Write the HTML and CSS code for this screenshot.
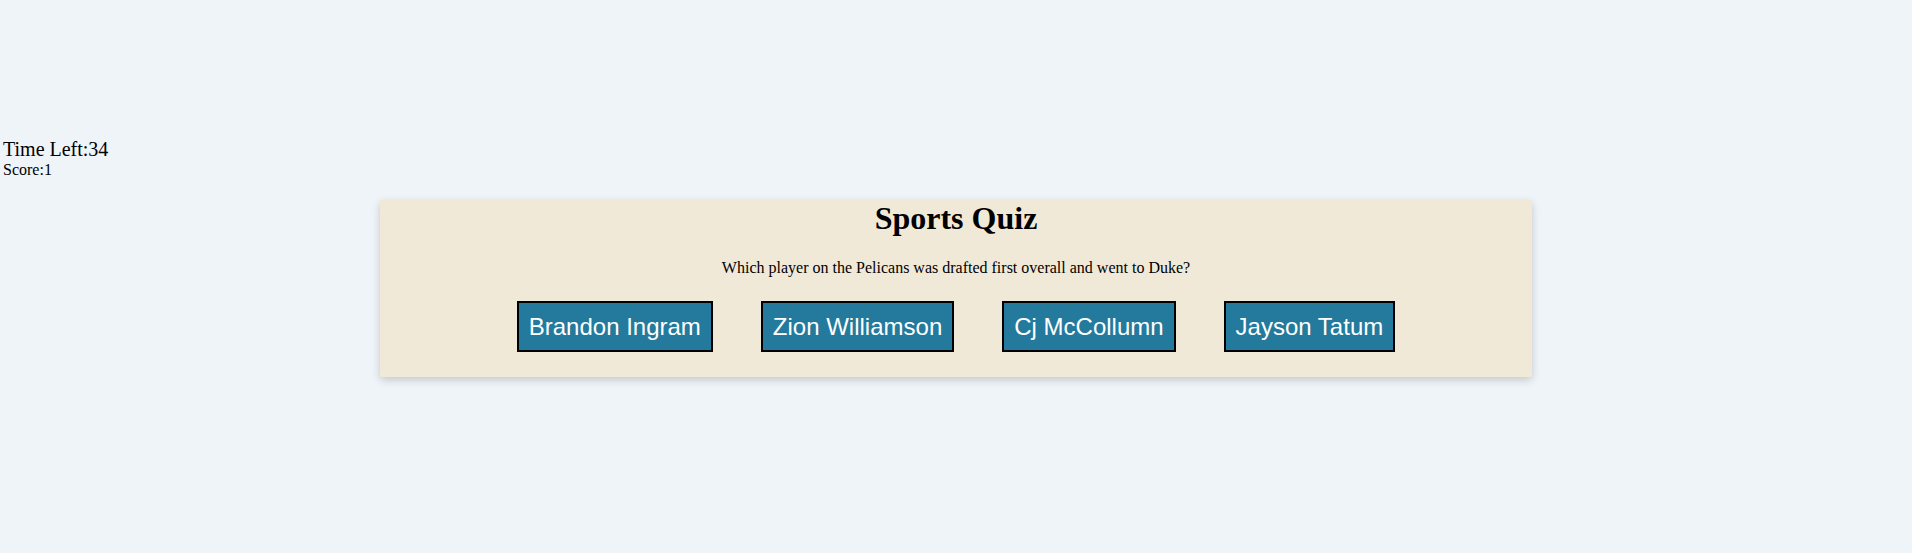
FILE: index.html
```html
<!DOCTYPE html>
<html>
<head>
<meta charset="utf-8">
<title>Sports Quiz</title>
<link rel="stylesheet" href="styles.css">
</head>
<body>
<div class="top-space"></div>
<div class="status">
  <div class="timer">Time Left:34</div>
  <div class="score">Score:1</div>
</div>
<main class="card">
  <h1 class="title">Sports Quiz</h1>
  <p class="question">Which player on the Pelicans was drafted first overall and went to Duke?</p>
  <div class="answers">
    <button class="answer">Brandon Ingram</button>
    <button class="answer">Zion Williamson</button>
    <button class="answer">Cj McCollumn</button>
    <button class="answer">Jayson Tatum</button>
  </div>
</main>
</body>
</html>
```
FILE: styles.css
```css
html, body {
  margin: 0;
  padding: 0;
}
body {
  background: #eff4f8;
  font-family: "Liberation Serif", "Times New Roman", serif;
  color: #000;
  width: 1912px;
  height: 553px;
  overflow: hidden;
}
.top-space {
  height: 138px;
}
.status {
  padding-left: 3px;
}
.timer {
  font-size: 20px;
  line-height: 23px;
}
.score {
  font-size: 16px;
  line-height: 18.4px;
}
.card {
  width: 1152px;
  margin: 21px auto 0;
  background: #f1e9d8;
  box-shadow: 0 3px 8px rgba(0, 0, 0, 0.18);
  padding: 0 0 25px;
  text-align: center;
}
.title {
  margin: 0;
  font-size: 32px;
  font-weight: bold;
  line-height: 36.8px;
}
.question {
  margin: 22px 0 23px;
  font-size: 16px;
  line-height: 18.4px;
}
.answers {
  display: flex;
  justify-content: center;
  gap: 48px;
}
.answer {
  font-family: "Liberation Sans", Arial, sans-serif;
  font-size: 24px;
  line-height: 27.6px;
  padding: 10px;
  margin: 0;
  border: 2px solid #000;
  background: #237a9d;
  color: #fff;
  cursor: pointer;
}
```
